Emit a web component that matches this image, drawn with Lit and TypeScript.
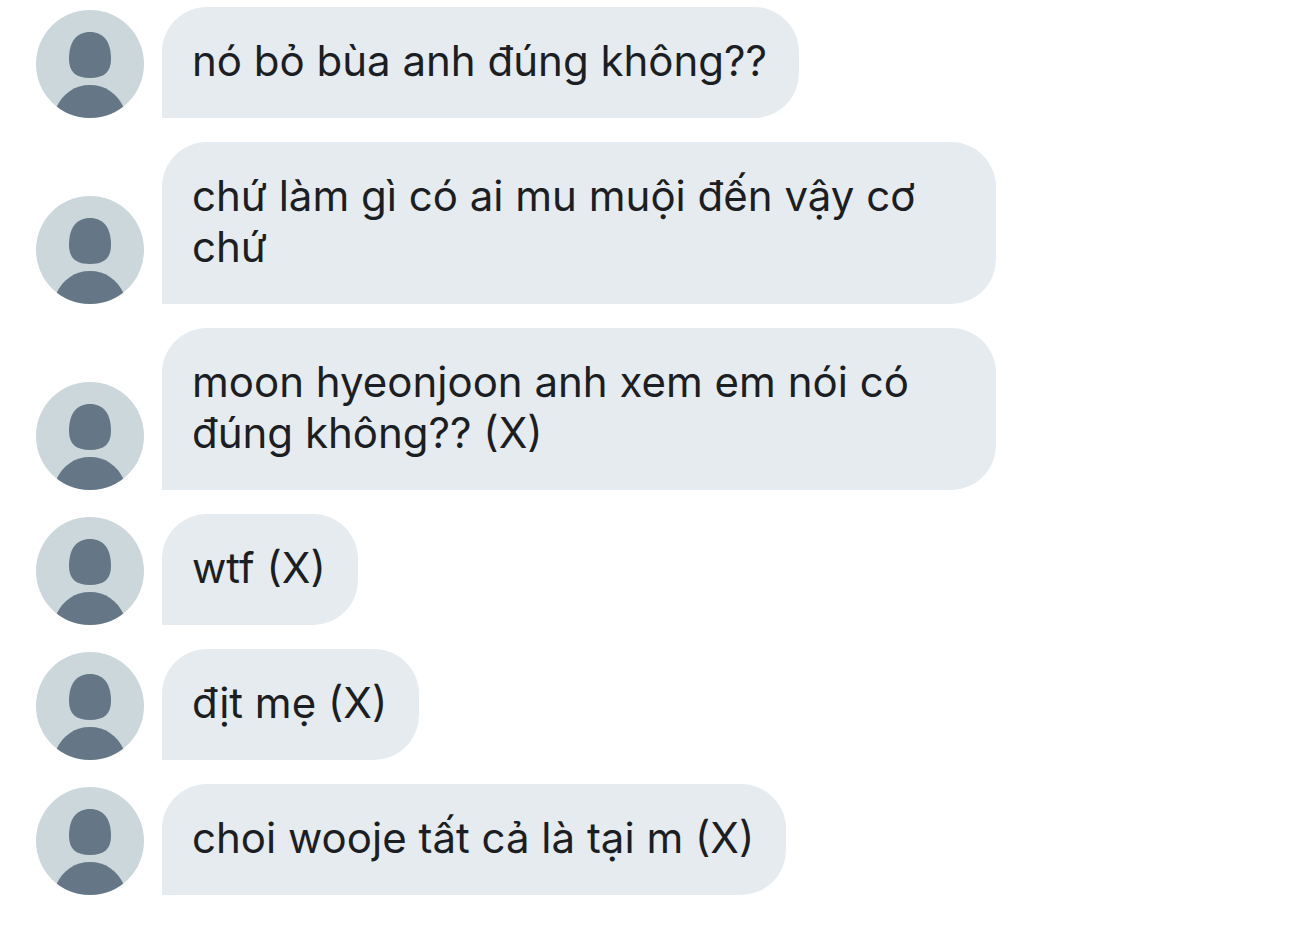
import { LitElement, html, css } from "lit";
import { customElement, property } from "lit/decorators.js";

const MESSAGES = [
  "nó bỏ bùa anh đúng không??",
  "chứ làm gì có ai mu muội đến vậy cơ chứ",
  "moon hyeonjoon anh xem em nói có đúng không?? (X)",
  "wtf (X)",
  "địt mẹ (X)",
  "choi wooje tất cả là tại m (X)",
];

@customElement("user-avatar")
export class UserAvatar extends LitElement {
  static styles = css`
    :host {
      display: block;
      flex: none;
      width: 108px;
      height: 108px;
      border-radius: 50%;
      overflow: hidden;
      background: #ccd7dc;
    }
    .figure {
      display: block;
      width: 100%;
      height: 100%;
      fill: #657786;
    }
  `;

  render() {
    return html`
      <svg class="figure" viewBox="0 0 108 108" aria-hidden="true">
        <path d="M54 22C67 22 75 31 75 49C75 62 68 68 54 68C40 68 33 62 33 49C33 31 41 22 54 22Z" />
        <path d="M20 98C27 83 39 75 54 75C69 75 81 83 88 98V108H20Z" />
      </svg>
    `;
  }
}

@customElement("chat-message")
export class ChatMessage extends LitElement {
  @property() text = "";

  static styles = css`
    :host {
      display: flex;
      align-items: flex-end;
      gap: 18px;
    }
    .bubble {
      box-sizing: border-box;
      margin: 0;
      max-width: 834px;
      padding: 28px 32px 32px 30px;
      border-radius: 45px 45px 45px 0;
      background: #e6ebef;
      color: #1b1e23;
      font: 400 42px/51px Inter, sans-serif;
    }
  `;

  render() {
    return html`
      <user-avatar></user-avatar>
      <p class="bubble">${this.text}</p>
    `;
  }
}

@customElement("app-root")
export class AppRoot extends LitElement {
  static styles = css`
    :host {
      display: block;
      min-height: 100vh;
      box-sizing: border-box;
      background: #fff;
    }
    .thread {
      display: flex;
      flex-direction: column;
      gap: 24px;
      padding: 7px 36px 32px;
    }
  `;

  render() {
    return html`
      <main class="thread">
        ${MESSAGES.map((text) => html`<chat-message .text=${text}></chat-message>`)}
      </main>
    `;
  }
}
